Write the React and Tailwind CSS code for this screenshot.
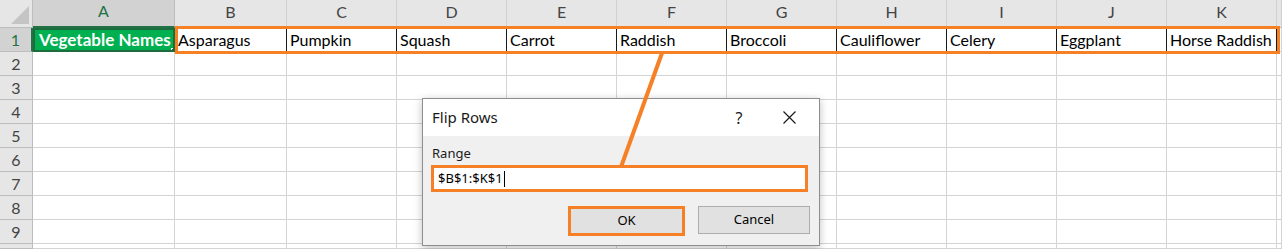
const cols = ['A', 'B', 'C', 'D', 'E', 'F', 'G', 'H', 'I', 'J', 'K', ''];
const veg = ['Asparagus', 'Pumpkin', 'Squash', 'Carrot', 'Raddish', 'Broccoli', 'Cauliflower', 'Celery', 'Eggplant', 'Horse Raddish'];
const rows = [1, 2, 3, 4, 5, 6, 7, 8, 9, 10];

export default function App() {
  return (
    <div className="relative w-[1282px] h-[249px] overflow-hidden bg-white font-['Lato','Liberation_Sans',sans-serif]">
      {/* Sheet grid */}
      <div className="grid grid-cols-[33px_142px_112px_repeat(9,110px)_1fr] grid-rows-[28px_repeat(9,24px)_1fr] h-full">
        {/* Corner */}
        <div className="relative bg-[#e6e6e6] border-r border-b border-[#bdbdbd]">
          <div className="absolute right-[3px] bottom-[3px] w-0 h-0 border-l-[18px] border-l-transparent border-b-[18px] border-b-[#c4c4c4]" />
        </div>
        {cols.map((c, i) => (
          <div
            key={c + i}
            className={
              i === 0
                ? 'flex items-end justify-center pb-[3px] bg-[#d2d2d2] border-r border-[#bdbdbd] border-b-2 border-b-[#217346] text-[#217346] text-[16px]'
                : 'flex items-end justify-center pb-[3px] bg-[#e6e6e6] border-r border-b border-[#d0d0d0] border-b-[#bdbdbd] text-[#444] text-[16px]'
            }
          >
            {c}
          </div>
        ))}

        {rows.map((r) => (
          <div key={r} className="contents">
            <div
              className={
                r === 1
                  ? 'flex items-center justify-center bg-[#d2d2d2] border-r-2 border-r-[#217346] border-b border-[#bdbdbd] text-[#217346] text-[16px]'
                  : 'flex items-center justify-center bg-[#e6e6e6] border-r border-[#bdbdbd] border-b text-[#444] text-[16px]'
              }
            >
              {r < 10 ? r : ''}
            </div>
            {r === 1 ? (
              <div className="relative bg-[#00b050] border-2 border-[#1e6b3e] flex items-center px-[4px] text-white font-bold text-[17px] whitespace-nowrap overflow-hidden">
                Vegetable Names
                <div className="absolute -right-[3px] -bottom-[3px] w-[5px] h-[5px] bg-[#1e6b3e] border border-white" />
              </div>
            ) : (
              <div className="border-r border-b border-[#d4d4d4]" />
            )}
            {cols.slice(1).map((c, i) => (
              <div
                key={c + i}
                className={
                  r === 1 && i < 10
                    ? 'flex items-center pl-[3px] border-r border-b border-r-[#1a1a1a] border-b-[#d4d4d4] text-[16px] text-black whitespace-nowrap overflow-hidden'
                    : 'border-r border-b border-[#d4d4d4]'
                }
              >
                {r === 1 && i < 10 ? veg[i] : ''}
              </div>
            ))}
          </div>
        ))}
      </div>

      {/* Highlight around row 1 */}
      <div className="absolute left-[175px] top-[26px] w-[1105px] h-[28px] border-[3px] border-[#f58025] pointer-events-none" />

      {/* Dialog */}
      <div className="absolute left-[422px] top-[98px] w-[398px] h-[148px] bg-[#f0f0f0] border border-[#8e8e8e] shadow-[0_2px_8px_rgba(0,0,0,0.25)] flex flex-col font-['Noto_Sans','Open_Sans',sans-serif]">
        <div className="h-[37px] bg-white flex items-center pl-[9px] text-[15px] text-[#1a1a1a]">
          <span className="flex-1">Flip Rows</span>
          <span className="w-[20px] text-center mr-[34px] text-[16px]">?</span>
          <svg width="13" height="13" viewBox="0 0 13 13" className="mr-[23px]">
            <path d="M0.5 0.5 L12.5 12.5 M12.5 0.5 L0.5 12.5" stroke="#1a1a1a" strokeWidth="1.2" />
          </svg>
        </div>
        <div className="relative flex-1">
          <div className="pl-[9px] pt-[9px] text-[13px] text-[#1a1a1a] leading-[16px]">Range</div>
          <div className="ml-[8px] mt-[4px] w-[377px] h-[27px] border-[3px] border-[#f58025] bg-white flex items-center pl-[4px] text-[13px] text-black">
            $B$1:$K$1<span className="w-px h-[16px] bg-black ml-px" />
          </div>
          <div className="flex gap-[13px] mt-[14px] ml-[145px]">
            <div className="w-[117px] h-[30px] border-[3px] border-[#f58025] bg-[#e1e1e1] flex items-center justify-center text-[13px] text-black">
              OK
            </div>
            <div className="w-[112px] h-[28px] border border-[#adadad] bg-[#e1e1e1] flex items-center justify-center text-[13px] text-black">
              Cancel
            </div>
          </div>
        </div>
      </div>

      {/* Connector line, drawn over the dialog */}
      <svg className="absolute inset-0 pointer-events-none" width="1282" height="249">
        <line x1="662" y1="53" x2="621" y2="167" stroke="#f58025" strokeWidth="4" />
      </svg>
    </div>
  );
}
